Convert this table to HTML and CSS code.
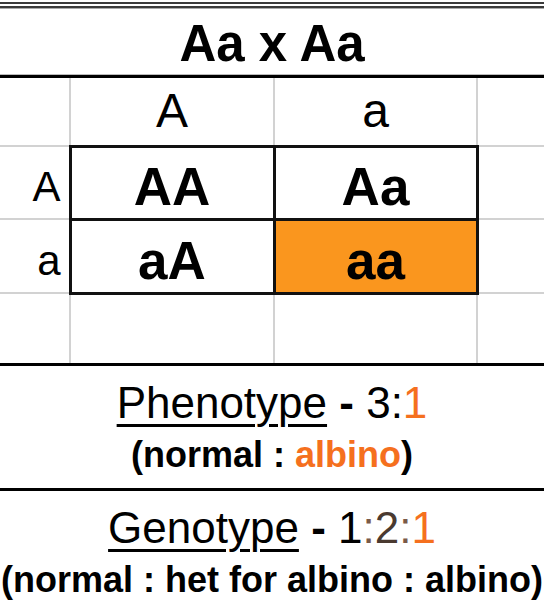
FILE: index.html
```html
<!DOCTYPE html>
<html lang="en">
<head>
<meta charset="utf-8">
<title>Aa x Aa Punnett square</title>
<link rel="stylesheet" href="styles.css">
</head>
<body>
<div class="sheet">
  <div class="title">Aa x Aa</div>
  <table class="grid">
    <colgroup>
      <col class="c0"><col class="c1"><col class="c2"><col class="c3">
    </colgroup>
    <tr class="hdr">
      <td></td><td>A</td><td>a</td><td></td>
    </tr>
    <tr class="r1">
      <td class="lbl">A</td><td class="cell">AA</td><td class="cell">Aa</td><td></td>
    </tr>
    <tr class="r2">
      <td class="lbl">a</td><td class="cell">aA</td><td class="cell hi">aa</td><td></td>
    </tr>
    <tr class="empty">
      <td></td><td></td><td></td><td></td>
    </tr>
  </table>
  <div class="section pheno">
    <div class="ratio"><span class="ul">Phenotype</span> <b>-</b> 3:<span class="orange">1</span></div>
    <div class="key">(normal : <span class="orange">albino</span>)</div>
  </div>
  <div class="section geno">
    <div class="ratio"><span class="ul">Genotype</span> <b>-</b> 1<span class="brown">:</span><span class="het">2</span><span class="brown">:</span><span class="orange">1</span></div>
    <div class="key">(normal : het for albino : albino)</div>
  </div>
</div>
</body>
</html>
```

FILE: styles.css
```css
html, body {
  margin: 0;
  padding: 0;
  background: #fff;
}
body {
  font-family: "Liberation Sans", Arial, sans-serif;
  color: #000;
  width: 544px;
  height: 610px;
  overflow: hidden;
}
.sheet {
  width: 544px;
  padding-top: 2px;
}
.title {
  height: 76px;
  box-sizing: border-box;
  padding-top: 3px;
  display: flex;
  align-items: center;
  justify-content: center;
  font-size: 51px;
  font-weight: bold;
  border-top: 6px double #3a3a3a;
  border-bottom: 3px solid #000;
  box-shadow: 0 -1px 0 #bbb inset, 0 1px 0 #aaa inset;
}
.grid {
  width: 544px;
  border-collapse: collapse;
  table-layout: fixed;
}
.c0 { width: 70px; }
.c1 { width: 204px; }
.c2 { width: 203px; }
.c3 { width: 67px; }
.grid td {
  border: 2px solid #d2d2d2;
  padding: 0;
  text-align: center;
  vertical-align: middle;
  line-height: 1;
}
.grid tr > td:first-child { border-left: none; }
.grid tr > td:last-child { border-right: none; }
.grid tr:first-child > td { border-top: none; }
.grid tr:last-child > td { border-bottom: none; }
.hdr { height: 68px; }
.r1 { height: 73px; }
.r2 { height: 74px; }
.empty { height: 70px; }
.hdr td {
  font-size: 48px;
}
.grid td.lbl {
  font-size: 42px;
  text-align: right;
  padding-right: 8px;
  padding-top: 9px;
}
.grid td.cell {
  border: 3px solid #111;
  font-size: 53px;
  font-weight: bold;
  padding-top: 8px;
}
.grid td.hi {
  background: #fa961e;
}
.section {
  text-align: center;
  white-space: nowrap;
  display: flow-root;
}
.pheno {
  border-top: 3px solid #000;
  border-bottom: 3px solid #000;
  height: 122px;
}
.pheno .ratio { margin-top: 11px; }
.geno .ratio { margin-top: 11px; }
.section .ratio {
  font-size: 44px;
  line-height: 52px;
}
.section .key {
  font-size: 36px;
  font-weight: bold;
  line-height: 52px;
}
.ul {
  text-decoration: underline;
  text-decoration-thickness: 3px;
  text-underline-offset: 6px;
}
.orange { color: #f5701e; }
.brown { color: #7a5a48; }
.het { color: #4a3a30; }
```
